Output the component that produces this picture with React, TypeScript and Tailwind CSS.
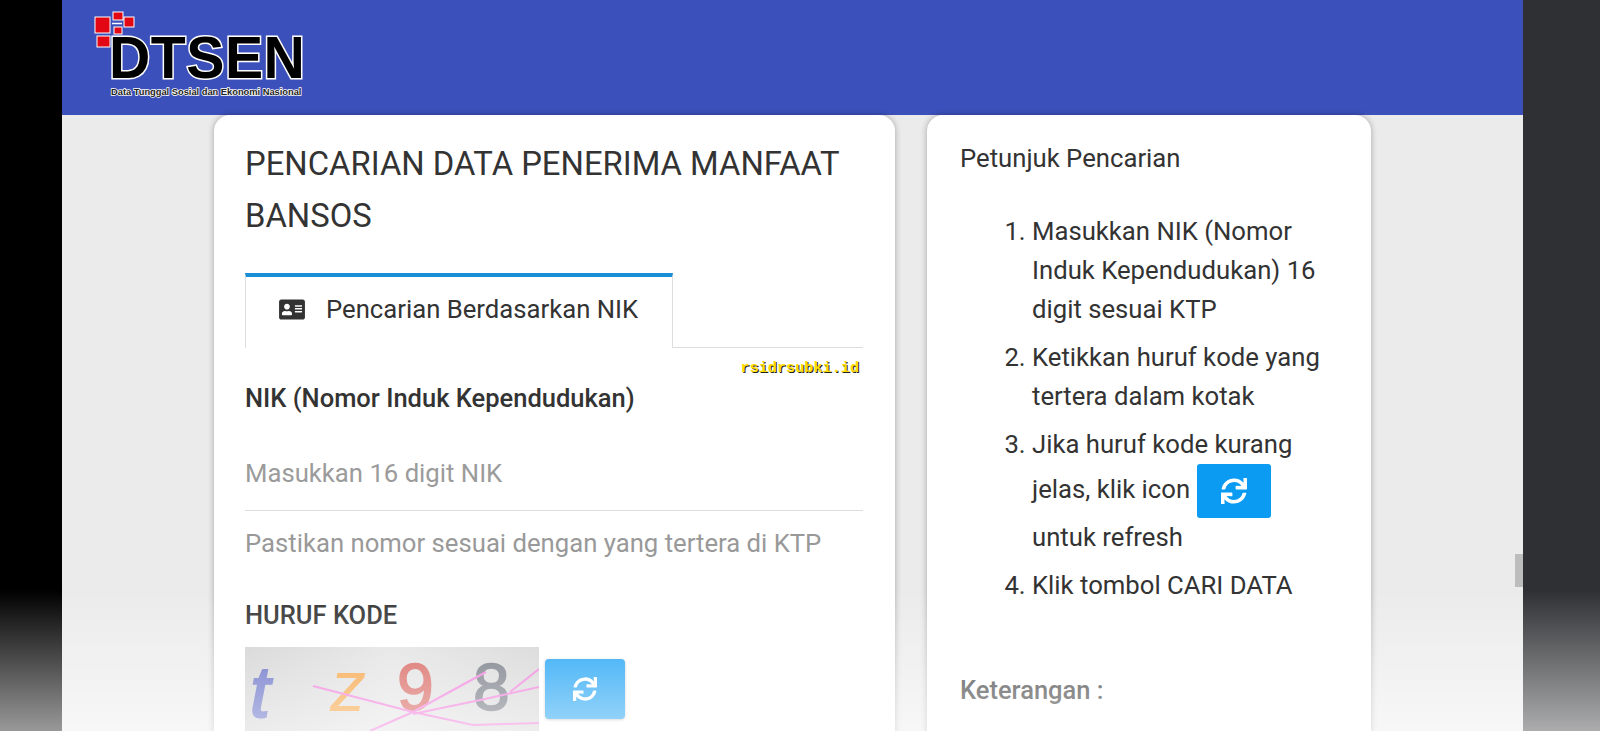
import { FaAddressCard, FaSync } from "react-icons/fa";

const BODY_TEXT = "text-[25.7px] leading-[32px]";
const LABEL_TEXT = "text-[25.5px] leading-[32px] font-medium text-[#333]";

function Logo() {
    return (
        <div className="relative ml-[32px] h-[100px] w-[220px] shrink-0">
            <svg className="absolute left-0 top-[10px]" width="44" height="40" viewBox="0 0 44 40">
                <g fill="#e30613" stroke="#fff" strokeWidth="1">
                    <rect x="1" y="7" width="15" height="16" />
                    <rect x="19" y="2" width="10" height="8" />
                    <rect x="30" y="7" width="10" height="10" />
                    <rect x="20" y="17" width="8" height="7" />
                    <rect x="3" y="26" width="13" height="11" />
                </g>
                <path d="M18 13.5 H28" stroke="#fff" strokeWidth="1.5" />
            </svg>
            <div className="absolute left-[15px] top-[31px] origin-left scale-x-[0.97] font-['Liberation_Sans',sans-serif] text-[59px] font-bold leading-[55px] tracking-[0.5px] text-black [-webkit-text-stroke:3px_#fff] [paint-order:stroke_fill]">
                DTSEN
            </div>
            <div className="absolute left-[17px] top-[87px] whitespace-nowrap font-['Liberation_Sans',sans-serif] text-[9.3px] font-bold leading-[11px] text-[#222] [-webkit-text-stroke:1.5px_#fff] [paint-order:stroke_fill]">
                Data Tunggal Sosial dan Ekonomi Nasional
            </div>
        </div>
    );
}

function Captcha() {
    return (
        <div className="relative h-[84px] w-[294px] overflow-hidden bg-gradient-to-r from-[#cfcfcf] via-[#e2e2e2] to-[#d2d2d2] font-['Liberation_Sans',sans-serif]">
            <div className="absolute inset-0 blur-[0.7px]">
                <span className="absolute left-[5px] top-[10px] text-[72px] italic leading-[70px] text-[#5560c0] [-webkit-text-stroke:2px_#5560c0]">t</span>
                <span className="absolute left-[85px] top-[4px] text-[72px] italic leading-[70px] text-[#f59a30]">z</span>
                <span className="absolute left-[152px] top-[5px] text-[66px] leading-[70px] text-[#d4554f] [-webkit-text-stroke:1.5px_#d4554f]">9</span>
                <span className="absolute left-[228px] top-[5px] text-[66px] leading-[70px] text-[#666b76] [-webkit-text-stroke:1.5px_#666b76]">8</span>
                <svg className="absolute inset-0" width="294" height="84" viewBox="0 0 294 84" fill="none" stroke="#f070d8" strokeWidth="2">
                    <path d="M68 39 L168 65 L228 78 L294 76" />
                    <path d="M125 84 L168 65 L241 25" />
                    <path d="M168 67 L240 52 L294 40" />
                    <path d="M265 45 L294 22" />
                </svg>
            </div>
        </div>
    );
}

export default function App() {
    return (
        <div className="relative flex h-[731px] w-full overflow-hidden bg-black font-['Roboto',sans-serif]">
            <div className="w-[62px] shrink-0 bg-black" />

            <div className="relative w-[1461px] shrink-0 bg-[#ebebeb]">
                <header className="flex h-[115px] items-start bg-[#3b50bb]">
                    <Logo />
                </header>

                <main className="flex items-start pl-[152px]">
                    <section className="relative h-[700px] w-[681px] shrink-0 rounded-t-[16px] bg-white pl-[31px] pr-[32px] pt-[23px] shadow-[0_0_6px_rgba(0,0,0,0.3)]">
                        <h1 className="text-[32.8px] leading-[52px] text-[#333]">
                            PENCARIAN DATA PENERIMA MANFAAT BANSOS
                        </h1>

                        <div className="mt-[31px] flex h-[75px] border-b border-[#ddd]">
                            <div className="flex h-[75px] w-[428px] items-center border-x border-t-4 border-x-[#ddd] border-t-[#1a8fd8] bg-white pb-[6px] pl-[33px]">
                                <FaAddressCard className="h-[23px] w-[26px] text-[#333]" />
                                <span className="ml-[21px] text-[25.7px] text-[#333]">Pencarian Berdasarkan NIK</span>
                            </div>
                        </div>

                        <span className="absolute right-[36px] top-[245px] font-['Liberation_Mono',monospace] text-[15.2px] font-bold leading-[16px] text-[#ffdd00] [text-shadow:1px_1px_0_#222]">
                            rsidrsubki.id
                        </span>

                        <label className={`mt-[34px] block ${LABEL_TEXT}`}>
                            NIK (Nomor Induk Kependudukan)
                        </label>

                        <div className={`mt-[43px] h-[54px] border-b border-[#ddd] text-[#9b9b9b] ${BODY_TEXT}`}>
                            Masukkan 16 digit NIK
                        </div>

                        <p className={`mt-[16px] text-[#999] ${BODY_TEXT}`}>
                            Pastikan nomor sesuai dengan yang tertera di KTP
                        </p>

                        <label className={`mt-[40px] block ${LABEL_TEXT}`}>
                            HURUF KODE
                        </label>

                        <div className="mt-[16px] flex items-start gap-[6px]">
                            <Captcha />
                            <button className="mt-[12px] flex h-[60px] w-[80px] items-center justify-center rounded-[4px] bg-[#0c9bf3] text-white shadow-[0_1px_3px_rgba(0,0,0,0.3)]">
                                <FaSync className="h-[24px] w-[24px]" />
                            </button>
                        </div>
                    </section>

                    <aside className="ml-[32px] h-[700px] w-[444px] shrink-0 rounded-t-[16px] bg-white pl-[33px] pr-[32px] pt-[25px] shadow-[0_0_6px_rgba(0,0,0,0.3)]">
                        <h2 className={`text-[#333] ${BODY_TEXT} leading-[36px]`}>Petunjuk Pencarian</h2>

                        <ol className="mt-[36px] list-decimal pl-[72px] text-[25.7px] leading-[39px] text-[#333]">
                            <li className="mb-[9px]">Masukkan NIK (Nomor Induk Kependudukan) 16 digit sesuai KTP</li>
                            <li className="mb-[9px]">Ketikkan huruf kode yang tertera dalam kotak</li>
                            <li className="mb-[9px]">
                                Jika huruf kode kurang jelas, klik icon{" "}
                                <span className="ml-[1px] inline-flex h-[54px] w-[74px] items-center justify-center rounded-[3px] bg-[#0c9bf3] align-middle text-white">
                                    <FaSync className="h-[26px] w-[26px]" />
                                </span>{" "}
                                untuk refresh
                            </li>
                            <li>Klik tombol CARI DATA</li>
                        </ol>

                        <p className={`mt-[69px] ${LABEL_TEXT}`}>Keterangan :</p>
                    </aside>
                </main>

                <div className="absolute right-0 top-[554px] h-[33px] w-[8px] bg-[#bdbdbd]" />
            </div>

            <div className="flex-1 bg-[#2f3033]" />

            {/* white fade across the bottom of the photo */}
            <div className="pointer-events-none absolute inset-x-0 bottom-0 h-[141px] bg-gradient-to-b from-white/0 to-white/60" />
        </div>
    );
}
